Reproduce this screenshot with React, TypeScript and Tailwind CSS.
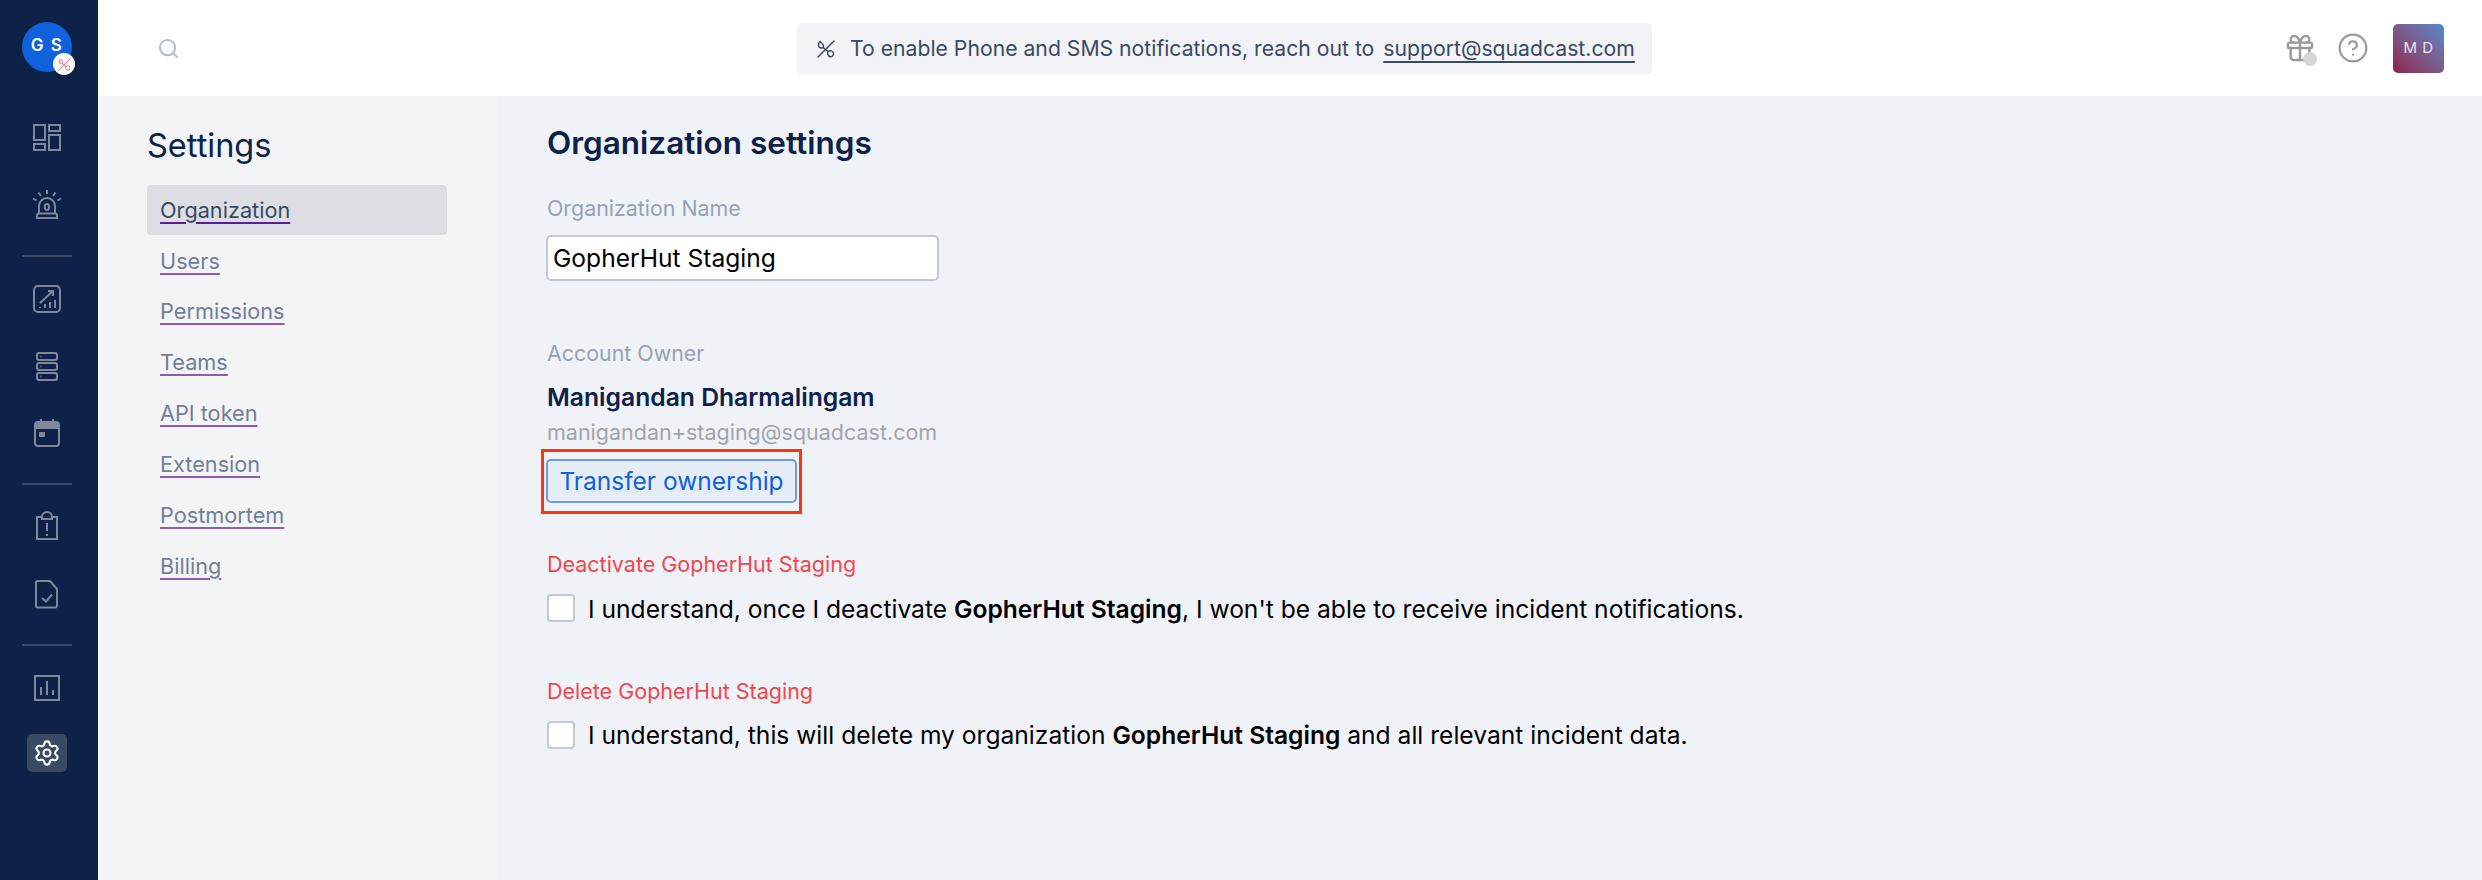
import { CircleHelp, Gift, Search, Settings } from 'lucide-react'

const links = ['Organization', 'Users', 'Permissions', 'Teams', 'API token', 'Extension', 'Postmortem', 'Billing']

function PercentMark({ size, color }: { size: number; color: string }) {
  return (
    <svg width={size} height={size} viewBox="0 0 18 18" fill="none" stroke={color} strokeWidth="1.4" strokeLinecap="round">
      <path d="M1 17 17 1" />
      <path d="M3 1.500C.5 3.500 1 7.500 4 8c2.500.4 3.500-2 1.500-4-1-1-2-1.800-2.500-2.500ZM6 7.500l5 4" />
      <path d="M11 11.500c2-1.300 5-.8 5.500 1.500.5 2.500-2 4.300-4 3.500-1.800-.7-2.500-3.500-1.500-5Z" />
    </svg>
  )
}

function NavIcon({ children }: { children: React.ReactNode }) {
  return (
    <div className="flex h-[67px] w-full items-center justify-center">
      <svg width="32" height="32" viewBox="0 0 32 32" fill="none" stroke="#7d889d" strokeWidth="2">
        {children}
      </svg>
    </div>
  )
}

function Divider() {
  return <div className="mb-[8px] mt-[17px] h-[2px] w-[50px] bg-[#3a4a66]" />
}

export default function App() {
  return (
    <div className="flex h-[880px] w-[2482px] overflow-hidden bg-[#eff2f7] font-['Inter','Liberation_Sans',sans-serif]">
      {/* Left nav */}
      <nav className="flex w-[98px] shrink-0 flex-col items-center bg-[#0d2149] pr-[4px] pt-[22px]">
        <div className="relative mb-[32px] flex h-[50px] w-[50px] items-center justify-center rounded-full bg-[#0f62dc] pb-[2px] text-[17px] font-semibold tracking-[1.500px] text-white">
          G S
          <span className="absolute left-[31px] top-[31px] flex h-[22px] w-[22px] items-center justify-center rounded-full bg-white shadow">
            <PercentMark size={13} color="#f87c85" />
          </span>
        </div>
        <NavIcon>
          <rect x="3" y="3" width="11" height="15" />
          <rect x="18" y="3" width="11" height="6" />
          <rect x="3" y="22" width="11" height="6" />
          <rect x="18" y="13" width="11" height="15" />
        </NavIcon>
        <NavIcon>
          <path d="M8 24v-7a8 8 0 0 1 16 0v7" />
          <path d="M6 29v-2.500a2 2 0 0 1 2-2h16a2 2 0 0 1 2 2V29Z" />
          <ellipse cx="16" cy="18" rx="2.200" ry="3" />
          <path d="M16 1v4M7.500 3.500l2.500 3.500M24.500 3.500 22 7M2 9.500l3.500 2M30 9.500l-3.500 2" />
        </NavIcon>
        <Divider />
        <NavIcon>
          <rect x="3" y="3" width="26" height="26" rx="4" />
          <path d="M9 20 22 8M17 8h5v5" />
          <path d="M9 25v-1M14 25v-4M19 25v-6M24 25v-8" />
        </NavIcon>
        <NavIcon>
          <rect x="6" y="3" width="20" height="7" rx="2" />
          <rect x="6" y="13" width="20" height="7" rx="2" />
          <rect x="6" y="23" width="20" height="7" rx="2" />
          <path d="M9.500 6.500h1M9.500 16.500h1M9.500 26.500h1" />
        </NavIcon>
        <NavIcon>
          <path d="M10 2v5M22 2v5" />
          <path d="M4 11V8a3 3 0 0 1 3-3h18a3 3 0 0 1 3 3v3Z" fill="#7d889d" />
          <path d="M4 11v15a3 3 0 0 0 3 3h18a3 3 0 0 0 3-3V11" />
          <rect x="8" y="15" width="6" height="5" fill="#7d889d" stroke="none" />
        </NavIcon>
        <Divider />
        <NavIcon>
          <path d="M11 6H6v22h20V6h-5" />
          <path d="M11 8V6a5 5 0 0 1 10 0v2Z" />
          <path d="M16 12v8M16 23v2" />
        </NavIcon>
        <NavIcon>
          <path d="M6 3h13l7 8v17a1.500 1.500 0 0 1-1.500 1.500h-18A1.500 1.500 0 0 1 5 28V4a1 1 0 0 1 1-1Z" />
          <path d="m11 20 4 3.500 6-7" />
        </NavIcon>
        <Divider />
        <NavIcon>
          <rect x="4" y="4" width="24" height="24" />
          <path d="M10 23v-8M16 23V9M22 23v-5" />
        </NavIcon>
        <div className="mt-[13px] flex h-[38px] w-[40px] items-center justify-center rounded-[5px] bg-[#3a4a63]">
          <Settings size={28} color="#ffffff" strokeWidth={1.8} />
        </div>
      </nav>

      <div className="flex min-w-0 flex-1 flex-col">
        {/* Top bar */}
        <header className="relative flex h-[96px] shrink-0 items-center bg-white">
          <Search size={23} color="#b3bac6" className="ml-[59px]" />
          <div className="ml-[617px] flex h-[51px] w-[855px] items-center rounded-[5px] bg-[#f1f3f6] pl-[20px] pt-[2px] text-[21.200px] text-[#3a4a63]">
            <PercentMark size={18} color="#3a4a63" />
            <span className="ml-[15px]">To enable Phone and SMS notifications, reach out to</span>
            <a className="ml-[9px] underline decoration-2 underline-offset-[5px]">support@squadcast.com</a>
          </div>
          <div className="ml-auto mr-[38px] flex items-center">
            <div className="relative">
              <Gift size={32} color="#9a9a9a" strokeWidth={1.8} />
              <span className="absolute left-[19px] top-[20px] h-[14px] w-[14px] rounded-full bg-[#d6d6d6]" />
            </div>
            <CircleHelp size={32} color="#9a9a9a" strokeWidth={1.6} className="ml-[21px]" />
            <div className="ml-[24px] flex h-[49px] w-[51px] items-center justify-center rounded-[5px] bg-gradient-to-tr from-[#8c1a4e] to-[#4a88cc] text-[15px] tracking-[0.500px] text-[#e8e4ee]">
              M D
            </div>
          </div>
        </header>

        <div className="flex min-h-0 flex-1">
          {/* Settings menu */}
          <aside className="w-[399px] shrink-0 bg-[#f3f4f6] pl-[49px] pt-[30px]">
            <h2 className="h-[40px] text-[32.500px] leading-[40px] text-[#0d2149]">Settings</h2>
            <ul className="mt-[19px] flex flex-col gap-[0.86px]">
              {links.map((name, i) => (
                <li
                  key={name}
                  className={
                    i === 0
                      ? 'flex h-[50px] w-[300px] items-center rounded-[4px] bg-[#dcdee3] pl-[13px] text-[21.700px] text-[#3a4a63]'
                      : 'flex h-[50px] w-[300px] items-center pl-[13px] text-[21.700px] text-[#727f97]'
                  }
                >
                  <a
                    className={
                      i === 0
                        ? 'underline decoration-[#5b1d9b] decoration-2 underline-offset-[4px]'
                        : 'underline decoration-[#8e5bb5] decoration-2 underline-offset-[4px]'
                    }
                  >
                    {name}
                  </a>
                </li>
              ))}
            </ul>
          </aside>

          {/* Organization settings */}
          <main className="flex-1 pl-[50px] pt-[27px]">
            <h1 className="h-[40px] text-[31.500px] font-semibold leading-[40px] text-[#0d2149]">Organization settings</h1>
            <p className="mt-[31px] h-[28px] text-[21.400px] leading-[28px] text-[#98a2b3]">Organization Name</p>
            <div className="ml-[-1px] mt-[13px] flex h-[46px] w-[393px] items-center rounded-[5px] border-2 border-[#c2c8d4] bg-white pl-[5px] text-[24.600px] text-black">
              GopherHut Staging
            </div>
            <p className="mt-[58px] h-[28px] text-[21.400px] leading-[28px] text-[#98a2b3]">Account Owner</p>
            <p className="mt-[16px] h-[28px] text-[24.700px] font-semibold leading-[28px] text-[#0d2149]">Manigandan Dharmalingam</p>
            <p className="mt-[7px] h-[28px] text-[21.500px] leading-[28px] text-[#a0a5ad]">manigandan+staging@squadcast.com</p>
            <button
              type="button"
              className="relative ml-[-1px] mt-[13px] block h-[44px] w-[251px] rounded-[5px] border-2 border-[#6d9be0] bg-[#e6edf7] text-center text-[24.500px] text-[#0f62dc]"
            >
              Transfer ownership
              <span className="absolute bottom-[-13px] left-[-7px] right-[-7px] top-[-12px] border-[3px] border-[#ff3311]" />
            </button>
            <p className="mt-[47px] h-[28px] text-[21.500px] leading-[28px] text-[#f4444f]">Deactivate GopherHut Staging</p>
            <label className="mt-[16px] flex h-[28px] items-center text-[24.600px] text-black">
              <span className="h-[28px] w-[28px] rounded-[4px] border-2 border-[#c2c8d4] bg-white" />
              <span className="ml-[13px] mt-[2px]">
                I understand, once I deactivate <b className="font-semibold">GopherHut Staging</b>, I won't be able to receive incident notifications.
              </span>
            </label>
            <p className="mt-[55px] h-[28px] text-[21.500px] leading-[28px] text-[#f4444f]">Delete GopherHut Staging</p>
            <label className="mt-[16px] flex h-[28px] items-center text-[24.600px] text-black">
              <span className="h-[28px] w-[28px] rounded-[4px] border-2 border-[#c2c8d4] bg-white" />
              <span className="ml-[13px]">
                I understand, this will delete my organization <b className="font-semibold">GopherHut Staging</b> and all relevant incident data.
              </span>
            </label>
          </main>
        </div>
      </div>
    </div>
  )
}
